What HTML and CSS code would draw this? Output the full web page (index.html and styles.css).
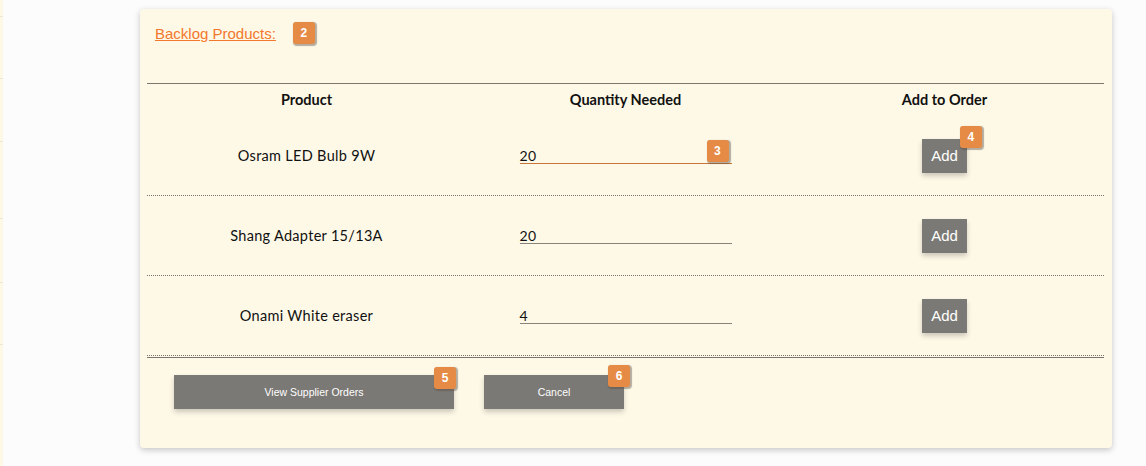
FILE: index.html
```html
<!DOCTYPE html>
<html>
<head>
<meta charset="utf-8">
<link rel="stylesheet" href="styles.css">
</head>
<body>
<div class="page">
  <aside class="side">
    <div class="side-item s1"></div>
    <div class="side-item s2"></div>
    <div class="side-item s3"></div>
    <div class="side-item s4"></div>
    <div class="side-item s5"></div>
    <div class="side-item s6"></div>
  </aside>
  <main class="main">
    <section class="card">
      <div class="title-row">
        <a class="title-link" href="#">Backlog Products:</a>
        <span class="badge badge-title">2</span>
      </div>
      <div class="table">
        <div class="row head">
          <div class="cell">Product</div>
          <div class="cell">Quantity Needed</div>
          <div class="cell">Add to Order</div>
        </div>
        <div class="row item">
          <div class="cell">Osram LED Bulb 9W</div>
          <div class="cell">
            <div class="qty-wrap">
              <div class="qty focused">20</div>
              <span class="badge badge-qty">3</span>
            </div>
          </div>
          <div class="cell">
            <div class="add-wrap">
              <button class="add-btn">Add</button>
              <span class="badge badge-add">4</span>
            </div>
          </div>
        </div>
        <div class="row item">
          <div class="cell">Shang Adapter 15/13A</div>
          <div class="cell">
            <div class="qty-wrap"><div class="qty">20</div></div>
          </div>
          <div class="cell">
            <div class="add-wrap"><button class="add-btn">Add</button></div>
          </div>
        </div>
        <div class="row item">
          <div class="cell">Onami White eraser</div>
          <div class="cell">
            <div class="qty-wrap"><div class="qty">4</div></div>
          </div>
          <div class="cell">
            <div class="add-wrap"><button class="add-btn">Add</button></div>
          </div>
        </div>
      </div>
      <div class="footer">
        <div class="btn-wrap">
          <button class="foot-btn wide">View Supplier Orders</button>
          <span class="badge badge-view">5</span>
        </div>
        <div class="btn-wrap">
          <button class="foot-btn narrow">Cancel</button>
          <span class="badge badge-cancel">6</span>
        </div>
      </div>
    </section>
  </main>
</div>
</body>
</html>
```

FILE: styles.css
```css
html, body {
  margin: 0;
  padding: 0;
  background: #fcfcfc;
}

.page {
  display: flex;
  align-items: flex-start;
  min-height: 466px;
}

.side {
  width: 3px;
  background: #fef9e7;
  height: 466px;
  display: flex;
  flex-direction: column;
}

.side-item {
  border-bottom: 1px solid #ece6d2;
  box-sizing: border-box;
}
.s1 { height: 17px; }
.s2 { height: 62px; }
.s3 { height: 63px; }
.s4 { height: 77px; }
.s5 { height: 64px; }
.s6 { height: 62px; }

.main {
  padding: 9px 0 0 137px;
}

.card {
  width: 972px;
  height: 439px;
  box-sizing: border-box;
  padding: 0 8px 0 7px;
  background: #fef9e7;
  border-radius: 4px;
  box-shadow: 0 2px 6px rgba(0, 0, 0, 0.22);
}

.title-row {
  height: 74px;
  box-sizing: border-box;
  padding: 13px 0 0 8px;
  display: flex;
  align-items: flex-start;
  gap: 17px;
}

.title-link {
  font-family: "Liberation Sans", Arial, sans-serif;
  font-size: 15px;
  line-height: 21px;
  margin-top: 1px;
  color: #f3772c;
  text-decoration: underline;
}

.badge {
  display: inline-flex;
  align-items: center;
  justify-content: center;
  width: 22px;
  height: 22px;
  border-radius: 3px;
  background: #e58b45;
  color: #ffffff;
  font-family: "Liberation Sans", Arial, sans-serif;
  font-weight: bold;
  font-size: 12px;
  box-shadow: 1px 1px 1px 1px rgba(90, 80, 70, 0.45);
}

.table {
  border-top: 1px solid #7b7770;
  border-bottom: 1px solid #7b7770;
}

.row {
  display: grid;
  grid-template-columns: 1fr 1fr 1fr;
  font-family: Lato, "Open Sans", sans-serif;
  color: #111111;
}

.row.head {
  height: 32px;
  font-weight: bold;
  font-size: 14.5px;
}

.row.head .cell {
  padding-bottom: 2px;
}

.row.item {
  height: 80px;
  box-sizing: border-box;
  border-bottom: 1px dotted #7b7770;
  font-size: 14.5px;
  letter-spacing: 0.3px;
}

.row.item:last-child {
  margin-bottom: 1px;
}

.cell {
  display: flex;
  align-items: center;
  justify-content: center;
}

.qty-wrap {
  position: relative;
  width: 212px;
}

.qty {
  height: 15px;
  line-height: 16px;
  padding-top: 0;
  border-bottom: 1px solid #8a857c;
  font-size: 14px;
  margin-top: 1px;
}

.qty.focused {
  border-bottom-color: #c9763a;
}

.badge-qty {
  position: absolute;
  right: 3px;
  bottom: 2px;
}

.add-wrap {
  position: relative;
}

.add-btn {
  display: block;
  width: 45px;
  height: 34px;
  border: none;
  padding: 0;
  background: #7b7975;
  color: #ffffff;
  font-family: "Liberation Sans", Arial, sans-serif;
  font-size: 15px;
  box-shadow: 0 3px 5px rgba(0, 0, 0, 0.2);
}

.badge-add {
  position: absolute;
  left: 38px;
  top: -13px;
}

.footer {
  display: flex;
  gap: 30px;
  padding: 17px 0 0 27px;
}

.btn-wrap {
  position: relative;
}

.foot-btn {
  display: block;
  height: 34px;
  border: none;
  padding: 0;
  background: #7b7975;
  color: #ffffff;
  font-family: "Liberation Sans", Arial, sans-serif;
  font-size: 10.5px;
  box-shadow: 0 3px 5px rgba(0, 0, 0, 0.2);
}

.foot-btn.wide { width: 280px; }
.foot-btn.narrow { width: 140px; }

.badge-view {
  position: absolute;
  right: -2px;
  top: -8px;
}

.badge-cancel {
  position: absolute;
  right: -6px;
  top: -10px;
}
```
